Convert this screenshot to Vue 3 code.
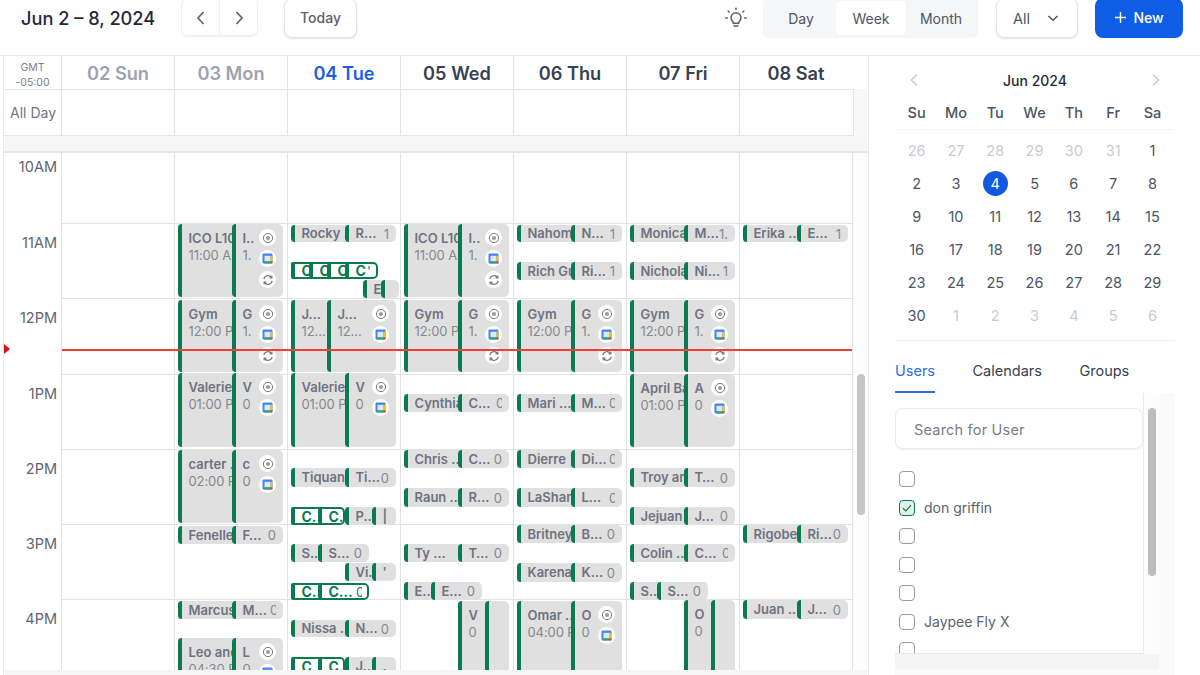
<script setup>
const dayHeads = [
  { label: '02 Sun', tone: 'past' },
  { label: '03 Mon', tone: 'past' },
  { label: '04 Tue', tone: 'today' },
  { label: '05 Wed', tone: '' },
  { label: '06 Thu', tone: '' },
  { label: '07 Fri', tone: '' },
  { label: '08 Sat', tone: '' }
]
const hours = [
  { label: '10AM', first: true },
  { label: '11AM' },
  { label: '12PM' },
  { label: '1PM' },
  { label: '2PM' },
  { label: '3PM' },
  { label: '4PM' }
]

const GRID_TOP = 153
const dots = (t) => (t ? t.replace('...', '…') : t)
const ev = (day, x, y, w, h, segs, opts = {}) => ({
  day,
  style: { left: x - 1 + 'px', top: y - GRID_TOP + 'px', width: w + 'px', height: h + 'px' },
  segs: segs.map(([sw, t, s, n]) => ({ w: sw + 'px', t: dots(t), s: dots(s), n })),
  ...opts
})
const block = (day, y, h, t1, s1, t2, s2, icons) =>
  ev(day, 4, y, 105, h, [[54, t1, s1], [51, t2, s2]], { tall: true, icons })
const chip = (day, y, t1, t2, n, h = 18) =>
  ev(day, 4, y, 105, h, [[54, t1], [51, t2, '', n]])

const events = [
  block(1, 224, 73, 'ICO L10', '11:00 AM', 'I..', '1.', 3),
  block(1, 300, 72, 'Gym', '12:00 PM', 'G', '1.', 3),
  block(1, 373, 74, 'Valerie', '01:00 PM', 'V', '0', 2),
  block(1, 450, 73, 'carter ..', '02:00 PM', 'c', '0', 2),
  chip(1, 526, 'Fenelle', 'F...', '0'),
  chip(1, 601, 'Marcus', 'M...', 'C'),
  block(1, 638, 60, 'Leo and', '04:30 PM', 'L', '0', 2),

  chip(2, 225, 'Rocky ..', 'R...', '1', 17),
  ev(2, 4, 262, 87, 17, [[18, 'C'], [18, 'C'], [18, 'C'], [33, 'C', '', "'"]], { outline: true }),
  ev(2, 76, 280, 36, 18, [[18, 'E'], [18, '']]),
  ev(2, 4, 300, 105, 72, [[36, 'J...', '12...'], [69, 'J...', '12...']], { tall: true, icons: 2 }),
  block(2, 373, 74, 'Valerie', '01:00 PM', 'V', '0', 2),
  chip(2, 468, 'Tiquan', 'Ti...', '0', 19),
  ev(2, 4, 507, 54, 18, [[27, 'C..'], [27, 'C..']], { outline: true }),
  ev(2, 58, 507, 51, 18, [[27, 'P..'], [24, '|']]),
  ev(2, 4, 544, 78, 18, [[27, 'S..'], [51, 'S...', '', '0']]),
  ev(2, 58, 563, 51, 18, [[27, 'Vi.'], [24, "'"]]),
  ev(2, 4, 583, 78, 17, [[27, 'C..'], [51, 'C...', '', 'C']], { outline: true }),
  chip(2, 620, 'Nissa ..', 'N...', '0', 17),
  ev(2, 4, 657, 54, 18, [[27, 'C..'], [27, 'C..']], { outline: true }),
  ev(2, 58, 657, 51, 18, [[27, 'J..'], [24, '.']]),

  block(3, 224, 73, 'ICO L10', '11:00 AM', 'I..', '1.', 3),
  block(3, 300, 72, 'Gym', '12:00 PM', 'G', '1.', 3),
  chip(3, 394, 'Cynthia', 'C...', 'C'),
  chip(3, 450, 'Chris ...', 'C...', '0'),
  chip(3, 488, 'Raun ...', 'R...', '0', 19),
  chip(3, 544, 'Ty ...', 'T...', '0'),
  ev(3, 4, 582, 78, 18, [[27, 'E..'], [51, 'E...', '', '0']]),
  ev(3, 58, 601, 51, 75, [[27, 'V', '0'], [24, '']], { tall: true }),

  chip(4, 225, 'Nahom', 'N...', '1', 17),
  chip(4, 262, 'Rich Gu', 'Ri...', '1'),
  block(4, 300, 72, 'Gym', '12:00 PM', 'G', '1.', 3),
  chip(4, 394, 'Mari ...', 'M...', 'C'),
  chip(4, 450, 'Dierre', 'Di...', 'C'),
  chip(4, 488, 'LaShar', 'L...', 'C', 19),
  chip(4, 525, 'Britney', 'B...', '0'),
  chip(4, 563, 'Karena', 'K...', '0', 19),
  block(4, 601, 75, 'Omar ..', '04:00 PM', 'O', '0', 2),

  chip(5, 225, 'Monica', 'M...', '1.', 17),
  chip(5, 262, 'Nichola', 'Ni...', '1'),
  block(5, 300, 72, 'Gym', '12:00 PM', 'G', '1.', 3),
  block(5, 374, 73, 'April Ba', '01:00 PM', 'A', '0', 2),
  chip(5, 468, 'Troy an', 'T...', '0', 19),
  chip(5, 507, 'Jejuan', 'J...', '0'),
  chip(5, 544, 'Colin ..', 'C...', 'C'),
  ev(5, 4, 582, 78, 18, [[27, 'S..'], [51, 'S...', '', '0']]),
  ev(5, 58, 600, 51, 75, [[27, 'O', '0'], [24, '']], { tall: true }),

  chip(6, 225, 'Erika ...', 'E...', '1', 17),
  chip(6, 525, 'Rigobe', 'Ri...', '0'),
  chip(6, 600, 'Juan ...', 'J...', '0', 19)
]
const dayEvents = (i) => events.filter((e) => e.day === i)

const weekdays = ['Su', 'Mo', 'Tu', 'We', 'Th', 'Fr', 'Sa']
const dates = [
  ...[26, 27, 28, 29, 30, 31].map((n) => ({ n, muted: true })),
  ...Array.from({ length: 30 }, (_, i) => ({ n: i + 1, today: i + 1 === 4 })),
  ...[1, 2, 3, 4, 5, 6].map((n) => ({ n, muted: true }))
]
const users = [
  { name: '' },
  { name: 'don griffin', on: true },
  { name: '' },
  { name: '' },
  { name: '' },
  { name: 'Jaypee Fly X' },
  { name: '' }
]
</script>

<template>
  <div class="page">
    <header class="top">
      <div class="range">Jun 2 – 8, 2024</div>
      <div class="nav">
        <button class="nav-btn">
          <svg width="16" height="16" viewBox="0 0 16 16"><path d="M10.500 2 5 8l5.500 6" class="chev" /></svg>
        </button>
        <button class="nav-btn">
          <svg width="16" height="16" viewBox="0 0 16 16"><path d="M5.500 2 11 8l-5.500 6" class="chev" /></svg>
        </button>
      </div>
      <button class="today-btn">Today</button>
      <div class="right">
        <svg class="bulb" width="24" height="24" viewBox="0 0 24 24" fill="none" stroke="#5c6068" stroke-width="1.5" stroke-linecap="round">
          <path d="M9.400 17.200c0-1.600-2.400-2.600-2.400-5.400a5 5 0 0 1 10 0c0 2.800-2.400 3.800-2.400 5.400z" />
          <path d="M10 19.600c.5 1 3.500 1 4 0" />
          <path d="M12 2.200v1.400M4.200 5 5.300 6M19.800 5l-1.100 1M1.800 12h1.600M20.600 12h1.600" />
        </svg>
        <div class="seg-switch">
          <span class="sw">Day</span>
          <span class="sw active">Week</span>
          <span class="sw">Month</span>
        </div>
        <div class="select">
          <span>All</span>
          <svg width="12" height="12" viewBox="0 0 12 12"><path d="M1.500 4 6 8.200 10.500 4" fill="none" stroke="#4b5563" stroke-width="1.500" /></svg>
        </div>
        <button class="new-btn">
          <svg width="13" height="13" viewBox="0 0 13 13"><path d="M6.500 1v11M1 6.500h11" stroke="#fff" stroke-width="1.400" /></svg>
          New
        </button>
      </div>
    </header>

    <div class="main">
      <section class="cal">
        <div class="head-row">
          <div class="gmt"><span>GMT</span><span>-05:00</span></div>
          <div v-for="d in dayHeads" :key="d.label" class="day-head" :class="d.tone">{{ d.label }}</div>
        </div>
        <div class="allday-wrap">
          <div class="allday">
            <div class="allday-label">All Day</div>
            <div v-for="d in dayHeads" :key="d.label" class="allday-cell"></div>
          </div>
        </div>
        <div class="gap"></div>
        <div class="scroller">
          <div class="grid">
            <div class="time-col">
              <div v-for="h in hours" :key="h.label" class="time-cell" :class="{ first: h.first }">{{ h.label }}</div>
            </div>
            <div v-for="(d, i) in dayHeads" :key="d.label" class="day-col">
              <div v-for="h in hours" :key="h.label" class="hour-cell" :class="{ first: h.first }"></div>
              <div
                v-for="(e, j) in dayEvents(i)"
                :key="j"
                class="event"
                :class="{ outline: e.outline, tall: e.tall }"
                :style="e.style"
              >
                <div v-for="(s, k) in e.segs" :key="k" class="part" :style="{ width: s.w }">
                  <template v-if="e.tall">
                    <div class="ttl">{{ s.t }}</div>
                    <div class="sub">{{ s.s }}</div>
                  </template>
                  <template v-else>
                    <span class="ttl">{{ s.t }}</span>
                    <span v-if="s.n" class="num" :class="{ clip: s.n === 'C' }">{{ s.n === 'C' ? '0' : s.n }}</span>
                  </template>
                </div>
                <div v-if="e.icons" class="icons">
                  <span class="ic">
                    <svg width="12" height="12" viewBox="0 0 12 12"><circle cx="6" cy="6" r="4.600" fill="none" stroke="#77797f" stroke-width="1" /><circle cx="6" cy="6" r="2.100" fill="#9a9ca2" /></svg>
                  </span>
                  <span class="ic">
                    <svg width="11" height="11" viewBox="0 0 11 11">
                      <rect x="0.500" y="0.500" width="10" height="10" rx="1" fill="#4285f4" />
                      <rect x="2.500" y="2.800" width="6" height="5.600" fill="#dfe8f8" />
                      <rect x="8.500" y="2.800" width="2" height="5.600" fill="#f4c20d" />
                      <rect x="2.500" y="8.400" width="6" height="2.100" fill="#34a853" />
                      <rect x="8.500" y="8.400" width="2" height="2.100" fill="#ea4335" />
                    </svg>
                  </span>
                  <span v-if="e.icons > 2" class="ic">
                    <svg width="12" height="12" viewBox="0 0 12 12" fill="none" stroke="#6f7177" stroke-width="1.100">
                      <path d="M1.800 5.200A4.300 4.300 0 0 1 9.600 3.600" />
                      <path d="M10.200 6.800A4.300 4.300 0 0 1 2.400 8.400" />
                      <path d="M9.900 1.600v2.300H7.600M2.100 10.400V8.100h2.300" />
                    </svg>
                  </span>
                </div>
              </div>
            </div>
            <div class="now-line"></div>
            <div class="now-mark"></div>
          </div>
          <div class="track"><div class="thumb"></div></div>
        </div>
        <div class="strip"></div>
      </section>

      <aside class="side">
        <div class="mini-head">
          <svg width="14" height="16" viewBox="0 0 14 16"><path d="M10 2.500 4.500 8l5.500 5.500" fill="none" stroke="#c6c8cd" stroke-width="1.500" /></svg>
          <span>Jun 2024</span>
          <svg width="14" height="16" viewBox="0 0 14 16"><path d="M4 2.500 9.500 8 4 13.500" fill="none" stroke="#c6c8cd" stroke-width="1.500" /></svg>
        </div>
        <div class="week-row">
          <span v-for="w in weekdays" :key="w">{{ w }}</span>
        </div>
        <div class="dates">
          <span v-for="(d, i) in dates" :key="i" class="date" :class="{ muted: d.muted }">
            <b v-if="d.today" class="today-dot">{{ d.n }}</b>
            <template v-else>{{ d.n }}</template>
          </span>
        </div>
        <div class="tabs">
          <span class="tab on">Users</span>
          <span class="tab">Calendars</span>
          <span class="tab">Groups</span>
        </div>
        <div class="panel-outer">
          <div class="panel">
            <div class="panel-inner">
              <div class="list">
                <div class="search">Search for User</div>
                <div v-for="(u, i) in users" :key="i" class="user">
                  <span class="box" :class="{ on: u.on }">
                    <svg v-if="u.on" width="12" height="12" viewBox="0 0 12 12"><path d="M2 6.200 4.900 9 10 3.200" fill="none" stroke="#0c7a50" stroke-width="1.200" /></svg>
                  </span>
                  <span>{{ u.name }}</span>
                </div>
              </div>
              <div class="list-track"><div class="list-thumb"></div></div>
            </div>
          </div>
        </div>
      </aside>
    </div>
  </div>
</template>

<style>
html, body { margin: 0; background: #fff; overflow: hidden; }
</style>

<style scoped>
* { box-sizing: border-box; }
.page {
  width: 1200px; height: 675px; overflow: hidden; background: #fff;
  font-family: Inter, "Liberation Sans", sans-serif; color: #374151;
  display: flex; flex-direction: column;
}
button { font-family: inherit; cursor: pointer; }

.top { height: 56px; flex: none; display: flex; align-items: flex-start; border-bottom: 1px solid #e8e8e8; }
.range { width: 181px; padding: 7px 0 0 21px; font-size: 18.2px; line-height: 22px; font-weight: 500; color: #1f2937; white-space: nowrap; }
.nav { width: 77px; height: 38px; margin: -2px 26px 0 0; display: flex; border: 1px solid #efefef; border-radius: 6px; box-shadow: 0 1px 1px #f2f2f2; }
.nav-btn { flex: 1; border: 0; background: #fff; padding: 2px 0 0; display: flex; align-items: center; justify-content: center; border-radius: 6px; }
.nav-btn + .nav-btn { border-left: 1px solid #efefef; border-radius: 0 6px 6px 0; }
.chev { fill: none; stroke: #5f636b; stroke-width: 1.7; }
.today-btn { width: 73px; height: 40px; margin-top: -2px; padding: 0 0 2px; border: 1px solid #e2e2e2; border-radius: 8px; background: #fff; font-size: 14px; font-weight: 500; color: #5b606b; box-shadow: 0 1px 2px #e4e4e4; }
.right { margin-left: auto; display: flex; align-items: flex-start; padding-right: 17px; }
.bulb { margin: 6px 15px 0 0; }
.seg-switch { width: 215px; height: 40px; margin: -2px 18px 0 0; padding: 3px 0 0 3px; background: #f5f6f8; border-radius: 6px; display: flex; align-items: flex-start; }
.sw { width: 70px; height: 34px; line-height: 35px; text-align: center; font-size: 14px; color: #4b5563; border-radius: 5px; }
.sw.active { background: #fff; }
.select { width: 82px; height: 40px; margin: -2px 17px 0 0; border: 1px solid #e2e2e2; border-radius: 8px; box-shadow: 0 1px 2px #e4e4e4; display: flex; align-items: center; justify-content: space-between; padding: 0 18px 0 16px; font-size: 14.5px; color: #4b5563; }
.new-btn { width: 88px; height: 40px; margin-top: -2px; padding: 0 0 1px; border: 0; border-radius: 8px; background: #0f5ce6; color: #fff; font-size: 14px; font-weight: 500; display: flex; align-items: center; justify-content: center; gap: 6px; }

.main { flex: 1; display: flex; min-height: 0; }
.cal { width: 866px; margin-left: 3px; flex: none; border-left: 1px solid #e8e8e8; border-right: 1px solid #e8e8e8; display: flex; flex-direction: column; }
.head-row { height: 33px; display: flex; flex: none; }
.gmt { width: 57px; display: flex; flex-direction: column; align-items: center; justify-content: center; font-size: 10.5px; line-height: 15px; color: #7a7f89; padding-top: 5px; }
.day-head { width: 113px; border-left: 1px solid #e3e3e3; text-align: center; line-height: 35px; font-size: 18.2px; font-weight: 600; color: #374151; }
.day-head.past { color: #9ca3af; }
.day-head.today { color: #1d5fdc; }
.allday-wrap { background: #f8f8f8; flex: none; }
.allday { width: 850px; height: 47px; display: flex; background: #fff; border-top: 1px solid #e6e6e6; border-bottom: 1px solid #e6e6e6; border-right: 1px solid #e6e6e6; }
.allday-label { width: 57px; font-size: 14px; color: #71757f; line-height: 45px; padding-left: 6px; white-space: nowrap; }
.allday-cell { width: 113px; border-left: 1px solid #e3e3e3; }
.gap { height: 17px; flex: none; background: #f6f6f6; border-bottom: 2px solid #e6e6e6; }
.scroller { height: 517px; flex: none; display: flex; }
.grid { width: 849px; height: 517px; flex: none; display: flex; position: relative; overflow: hidden; border-right: 1px solid #e3e3e3; }
.time-col { width: 57px; flex: none; }
.time-cell { height: 75.3px; text-align: right; padding: 10px 4px 0 0; font-size: 14.5px; line-height: 17px; color: #5f6570; }
.time-cell.first { height: 71px; padding-top: 5px; }
.day-col { width: 113px; flex: none; position: relative; border-left: 1px solid #e3e3e3; }
.hour-cell { height: 75.3px; border-bottom: 1px solid #e3e3e3; }
.hour-cell.first { height: 71px; }
.strip { flex: 1; background: #f6f6f6; }

.event { position: absolute; display: flex; background: #e0e0e0; border-radius: 0 5px 5px 0; overflow: hidden; font-size: 13px; line-height: 18px; }
.event.outline { background: #fff; box-shadow: inset 0 0 0 2px #0b7a4f; border-radius: 2px 5px 5px 2px; }
.part { flex: none; height: 100%; border-left: 4px solid #0b7a4f; border-radius: 4px 0 0 4px; padding: 0 7px 0 6.5px; overflow: hidden; display: flex; justify-content: space-between; align-items: center; white-space: nowrap; }
.event.tall .part { display: block; padding-top: 6px; }
.ttl { flex: none; font-weight: 600; color: #6f7280; line-height: 17px; }
.sub { color: #85888f; line-height: 17px; font-size: 13px; letter-spacing: -0.1px; }
.num { color: #85888f; font-weight: 400; flex: none; }
.num.clip { width: 6px; overflow: hidden; }
.outline .ttl { color: #0b7a4f; font-weight: 700; font-size: 14px; }
.outline .num { color: #0b7a4f; }
.icons { position: absolute; right: 7px; top: 5px; display: flex; flex-direction: column; gap: 4px; }
.ic { width: 17px; height: 17px; border-radius: 50%; background: #fff; display: flex; align-items: center; justify-content: center; }

.now-line { position: absolute; z-index: 3; left: 58px; top: 195.5px; width: 791px; height: 2px; background: #ee4038; }
.now-mark { position: absolute; z-index: 3; left: 0; top: 191px; width: 0; height: 0; border-left: 6px solid #e01010; border-top: 5px solid transparent; border-bottom: 5px solid transparent; }

.track { width: 15px; flex: none; background: #fcfcfc; padding: 221px 0 0 4px; }
.thumb { width: 8px; height: 141px; background: #c6c6c6; border-radius: 4px; }

.side { flex: 1; padding-left: 26px; display: flex; flex-direction: column; min-width: 0; }
.mini-head { width: 280px; height: 20px; margin-top: 14px; padding: 0 12px; display: flex; align-items: center; justify-content: space-between; font-size: 14px; font-weight: 500; color: #1f2937; }
.week-row { width: 278px; height: 34px; margin-top: 6px; padding: 0 2px; display: grid; grid-template-columns: repeat(7, 39.3px); align-items: center; text-align: center; font-size: 14.5px; font-weight: 500; color: #4b5563; border-bottom: 1px solid #f3f3f3; }
.dates { width: 278px; height: 206px; margin-top: 4px; padding: 0 2px; display: grid; grid-template-columns: repeat(7, 39.3px); grid-auto-rows: 33px; font-size: 14.5px; color: #4b5563; }
.date { display: flex; align-items: center; justify-content: center; }
.date.muted { color: #c9cbcf; }
.today-dot { width: 25px; height: 25px; border-radius: 50%; background: #1259e0; color: #fff; font-weight: 400; display: flex; align-items: center; justify-content: center; }
.tabs { width: 280px; height: 53px; flex: none; border-top: 1px solid #f1f1f1; display: flex; align-items: flex-end; gap: 37.500px; font-size: 14.5px; color: #374151; }
.tab { height: 41px; padding-top: 10px; line-height: 18px; }
.tab.on { color: #2e6ce0; border-bottom: 2px solid #2e6ce0; }
.panel-outer { width: 280px; flex: 1; background: #fafafa; padding-right: 16px; min-height: 0; }
.panel { height: 276px; background: #f5f5f5; padding-bottom: 15px; }
.panel-inner { height: 261px; background: #fff; display: flex; }
.list { width: 249px; flex: none; overflow: hidden; border-right: 1px solid #ececec; border-bottom: 1px solid #e8e8e8; padding-top: 15px; }
.search { width: 248px; height: 41px; margin-bottom: 16px; padding: 0 18px; line-height: 42px; font-size: 14.5px; letter-spacing: 0.2px; color: #777c87; border: 1px solid #eaeaea; border-radius: 8px; box-shadow: 0 1px 2px #f0f0f0; }
.user { height: 28.500px; padding-left: 4px; display: flex; align-items: center; gap: 9px; font-size: 14px; color: #5a6170; flex: none; }
.box { width: 16px; height: 16px; flex: none; border: 1.500px solid #9a9a9a; border-radius: 4px; display: flex; align-items: center; justify-content: center; }
.box.on { border-color: #0c7a50; background: #dff2ea; }
.list-track { flex: 1; background: #fcfcfc; padding: 15px 0 0 4px; }
.list-thumb { width: 8px; height: 168px; background: #bdbdbd; border-radius: 4px; }
</style>
